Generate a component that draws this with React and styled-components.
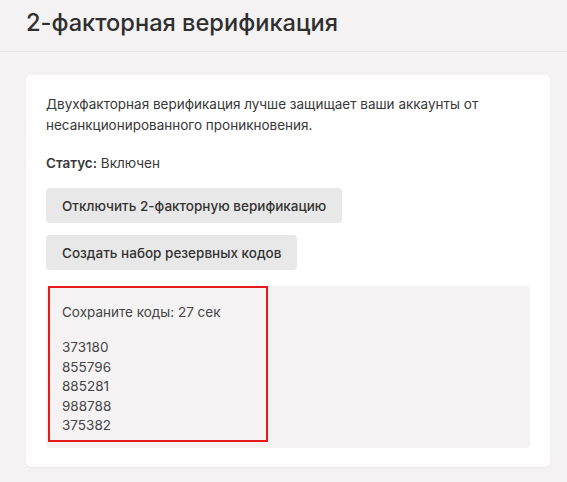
import React from "react";
import styled, { createGlobalStyle } from "styled-components";

const GlobalStyle = createGlobalStyle`
  html, body {
    margin: 0;
    padding: 0;
    background: #f4f2f3;
  }
  body {
    font-family: Inter, "Noto Sans", sans-serif;
    color: #333;
  }
`;

const codes = ["373180", "855796", "885281", "988788", "375382"];

const App = () => {
  return (
    <>
      <GlobalStyle />
      <PageStyled>
        <Header>
          <h1>2-факторная верификация</h1>
        </Header>
        <Card>
          <p className="intro">
            Двухфакторная верификация лучше защищает ваши аккаунты от
            несанкционированного проникновения.
          </p>
          <p className="status">
            <b>Статус:</b> Включен
          </p>
          <Button>Отключить 2-факторную верификацию</Button>
          <Button>Создать набор резервных кодов</Button>
          <CodesBox>
            <CodesList>
              <p className="timer">Сохраните коды: 27 сек</p>
              {codes.map((code) => (
                <span key={code}>{code}</span>
              ))}
            </CodesList>
          </CodesBox>
        </Card>
      </PageStyled>
    </>
  );
};

export default App;

const PageStyled = styled.div`
  min-height: 482px;
`;

const Header = styled.header`
  height: 52px;
  padding: 0 26px;
  display: flex;
  align-items: center;
  border-bottom: 1px solid #e9e7e8;
  box-sizing: border-box;

  h1 {
    margin: 0 0 7px;
    font-size: 23.6px;
    font-weight: 500;
    color: #2f2f2f;
  }
`;

const Card = styled.section`
  margin: 23px 17px 0 26px;
  background: #fff;
  border-radius: 5px;
  padding: 19px 20px 19px;
  display: flex;
  flex-direction: column;
  align-items: flex-start;
  box-shadow: 0 1px 1px rgba(0, 0, 0, 0.04);

  p {
    margin: 0;
    font-size: 13.5px;
    line-height: 21px;
    color: #383838;
  }

  .intro {
    margin-bottom: 17px;
  }

  .status {
    margin-bottom: 14px;

    b {
      font-weight: 600;
    }
  }
`;

const Button = styled.button`
  height: 35px;
  padding: 0 16px;
  margin-bottom: 12px;
  border: none;
  border-radius: 4px;
  background: #e9e8e9;
  color: #333;
  font-family: Inter, "Noto Sans", sans-serif;
  font-size: 13.5px;
  font-weight: 500;
  cursor: pointer;
`;

const CodesBox = styled.div`
  align-self: stretch;
  margin-top: 4px;
  height: 162px;
  background: #f4f2f3;
  border-radius: 4px;
  padding-left: 2px;
`;

const CodesList = styled.div`
  width: 220px;
  height: 156px;
  box-sizing: border-box;
  border: 2px solid #e8191b;
  padding: 14px 12px;
  display: flex;
  flex-direction: column;
  font-size: 13.5px;
  line-height: 19.5px;
  color: #454545;

  p.timer {
    margin-bottom: 16px;
    line-height: 20px;
    font-size: 13.5px;
    color: #454545;
  }
`;
